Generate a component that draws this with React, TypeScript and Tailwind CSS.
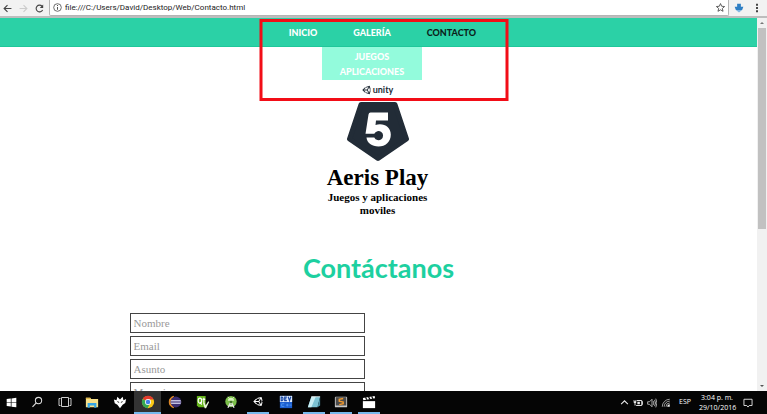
import type { ReactNode } from "react";
import { FaUnity } from "react-icons/fa";

function Glyph({ children, box = "0 0 16 16", className = "size-[14px]" }: { children: ReactNode; box?: string; className?: string }) {
  return (
    <svg viewBox={box} className={`block shrink-0 ${className}`} fill="none" aria-hidden="true">
      {children}
    </svg>
  );
}

type Task = { name: string; active?: boolean; open?: boolean; icon: ReactNode };

const tasks: Task[] = [
  {
    name: "Buscar",
    icon: (
      <Glyph className="size-[12px]">
        <circle cx="10" cy="6" r="4.2" stroke="#ddd" strokeWidth="1.4" />
        <path d="M7 9.2 2 14.5" stroke="#ddd" strokeWidth="1.6" />
      </Glyph>
    ),
  },
  {
    name: "Vista de tareas",
    icon: (
      <Glyph box="0 0 14 12" className="h-[12px] w-[14px]">
        <path d="M3.5 1.5h7v9h-7zM2.500 2.500H1v7h1.500M11.500 2.500H13v7h-1.500" stroke="#ccc" />
      </Glyph>
    ),
  },
  {
    name: "Explorador de archivos",
    icon: (
      <Glyph>
        <path d="M1 3h5l1 1.500h8V14H1z" fill="#f7e08a" />
        <path d="M1 3h5l1 1.500H1z" fill="#e0b84c" />
        <path d="M3 14.500V9h10v5.500h-2.500V12h-5v2.500z" fill="#35a5e5" />
      </Glyph>
    ),
  },
  {
    name: "GitKraken",
    icon: (
      <Glyph>
        <path d="M1 5 4 6 5 2 8 5 11 2 12 6 15 4.500 14 9 11 11 8 15 5 11 2 9.500Z" fill="#fff" />
        <path d="M5 7.500 7 8.500M11 7.500 9 8.500" stroke="#111" />
      </Glyph>
    ),
  },
  {
    name: "Chrome",
    active: true,
    open: true,
    icon: (
      <Glyph>
        <circle cx="8" cy="8" r="7" fill="#fbc916" />
        <path d="M8 8 1.900 4.600A7 7 0 0 1 14.400 5H8z" fill="#e33b2e" />
        <path d="M1.900 4.600A7 7 0 0 0 7.500 15L10.600 9.500 8 8z" fill="#36a852" />
        <circle cx="8" cy="8" r="3.400" fill="#fff" />
        <circle cx="8" cy="8" r="2.600" fill="#3f7fe8" />
      </Glyph>
    ),
  },
  {
    name: "Eclipse",
    icon: (
      <Glyph>
        <path d="M6.500 1.500a6.700 6.700 0 0 0 0 13A9 9 0 0 1 6.500 1.500z" fill="#f0932b" stroke="#f0932b" />
        <circle cx="9" cy="8" r="6.200" fill="#3b2d70" />
        <path d="M3.500 6.200h11M3 8h12M3.500 9.800h11" stroke="#c4c0e0" strokeWidth="1.200" />
      </Glyph>
    ),
  },
  {
    name: "Qt",
    icon: (
      <Glyph>
        <path d="M1 1h10v13H3l-2-2z" fill="#66b51b" />
        <ellipse cx="4.500" cy="6.500" rx="2" ry="3" stroke="#fff" strokeWidth="1.300" />
        <path d="m4.500 8 2 3M9 3v6.500M7.500 5h3" stroke="#fff" strokeWidth="1.300" />
        <path d="M8 9h2l1 3 3-5 1 1-3.500 7H10z" fill="#e8f6d8" />
      </Glyph>
    ),
  },
  {
    name: "Android Studio",
    icon: (
      <Glyph>
        <circle cx="8" cy="7.500" r="6.500" fill="#7cbf4b" />
        <path d="M4.500 6.500a3.500 3.500 0 0 1 7 0z" fill="#d9f1bd" />
        <path d="m4.500 2 1.500 2M11.500 2 10 4" stroke="#d9f1bd" />
        <path d="m8 7.500-3.500 7M8 7.500l3.500 7M5.500 12h5" stroke="#e6e6e6" strokeWidth="1.500" />
        <circle cx="8" cy="8" r="1.500" fill="#44722a" />
      </Glyph>
    ),
  },
  {
    name: "Unity",
    open: true,
    icon: <FaUnity className="size-[11px] text-white" aria-hidden="true" />,
  },
  {
    name: "Dev-C++",
    icon: (
      <Glyph>
        <path d="M1 1h14v14H1z" fill="#1d5fd0" />
        <path d="M1 1h14v7H1z" fill="#dce8fb" />
        <path d="M2.500 2.500v4h1l1-1v-2l-1-1zM9 2.500H6.500v4H9M6.500 4.500h2M10.500 2l1.500 4.500L13.500 2" stroke="#1746a5" strokeWidth="1.300" />
        <path d="M6 10H3v3h3M8 11.500h3M9.500 10v3M12 11.500h2.500" stroke="#4f97f2" />
      </Glyph>
    ),
  },
  {
    name: "Bloc de notas",
    open: true,
    icon: (
      <Glyph>
        <path d="M5 2h10l-3 12H1z" fill="#7cc3d4" />
        <path d="M5 2h5L5 14H1z" fill="#c9eef4" />
        <path d="m12 14 3-12v10z" fill="#4790a5" />
        <path d="M5 2h10" stroke="#eee" />
      </Glyph>
    ),
  },
  {
    name: "Sublime Text",
    open: true,
    icon: (
      <Glyph>
        <rect x="1" y="2" width="14" height="12" rx="1" fill="#c9c9c9" />
        <rect x="2" y="2.500" width="12" height="9.500" fill="#4b4b4b" />
        <path d="M10.500 4 6 5v2l4.500 1v2L6 11" stroke="#f29a2e" strokeWidth="1.600" />
      </Glyph>
    ),
  },
  {
    name: "Películas y TV",
    open: true,
    icon: (
      <Glyph>
        <path d="M1 7h14v8H1z" fill="#fff" />
        <path d="m1 3.500 13.500-2.300.4 2.500L1.500 6z" fill="#fff" />
        <path d="m4 2.500 1.500 3M7.500 2 9 5M11 1.500l1.500 3" stroke="#111" strokeWidth="1.400" />
      </Glyph>
    ),
  },
];

const linkStyle = "block whitespace-nowrap hover:underline";

function BrowserBar() {
  return (
    <header className="flex h-[18px] shrink-0 items-center border-b-2 border-[#bdbdbd] bg-[#f2f2f2]">
      <div className="flex w-[49px] shrink-0 items-center justify-between pr-[5px] pl-[3px]">
        <button aria-label="Atrás">
          <Glyph className="size-[9px]">
            <path d="M15 8H2M8 2 2 8l6 6" stroke="#444" strokeWidth="2" />
          </Glyph>
        </button>
        <button aria-label="Adelante">
          <Glyph className="size-[9px]">
            <path d="M1 8h13M8 2l6 6-6 6" stroke="#ccc" strokeWidth="2" />
          </Glyph>
        </button>
        <button aria-label="Recargar">
          <Glyph className="size-[9px]">
            <path d="M13.500 10.500A6 6 0 1 1 12.500 4" stroke="#444" strokeWidth="2" />
            <path d="M14.500 1v6h-6z" fill="#444" />
          </Glyph>
        </button>
      </div>
      <div className="flex h-[16px] min-w-0 flex-1 items-center gap-[3px] rounded-b-xs border border-t-0 border-[#b5b5b5] bg-white px-[3px]">
        <Glyph className="size-[9px]">
          <circle cx="8" cy="8" r="6.800" stroke="#555" strokeWidth="1.500" />
          <path d="M8 7v5M8 3.500v2" stroke="#555" strokeWidth="1.800" />
        </Glyph>
        <input
          aria-label="Dirección"
          defaultValue="file:///C:/Users/David/Desktop/Web/Contacto.html"
          className="h-[14px] min-w-0 flex-1 bg-transparent font-['Roboto',sans-serif] text-[8px] text-[#222] outline-none"
        />
        <button aria-label="Favorito">
          <Glyph className="size-[9px]">
            <path d="m8 1 2.100 4.800 5.200.5-4 3.400 1.200 5.100L8 12.100l-4.500 2.700 1.200-5.100-4-3.400 5.200-.5z" stroke="#444" strokeWidth="1.500" />
          </Glyph>
        </button>
      </div>
      <div className="flex w-[38px] shrink-0 items-center justify-between px-[5px]">
        <button aria-label="Descargas">
          <Glyph className="size-[10px]">
            <path d="M5 1h6v5h4l-2 5H3L1 6h4z" fill="#2f7fc4" />
            <path d="M3 11h10l-5 4z" fill="#7fb7e2" />
          </Glyph>
        </button>
        <button aria-label="Menú">
          <Glyph box="0 0 10 10" className="size-[10px]">
            <path d="M4 .8h2v2H4zM4 4h2v2H4zM4 7.200h2v2H4z" fill="#444" />
          </Glyph>
        </button>
      </div>
    </header>
  );
}

function SiteNav() {
  return (
    <nav className="flex h-[29px] justify-center border-b border-[#1fc79a] bg-[#2bd1a6] font-['Lato',sans-serif] text-[9px] leading-[15px] font-black text-white">
      <ul className="flex items-start gap-9 pt-[7px] pl-2">
        <li>
          <a href="#inicio" className={linkStyle}>INICIO</a>
        </li>
        <li className="relative">
          <a href="#galeria" className={linkStyle}>GALERÍA</a>
          <ul className="absolute top-[22px] left-1/2 z-10 w-[100px] -translate-x-1/2 bg-[#93fbdc] pt-[2px] pb-[1px] text-center">
            <li>
              <a href="#juegos" className={linkStyle}>JUEGOS</a>
            </li>
            <li>
              <a href="#aplicaciones" className={linkStyle}>APLICACIONES</a>
            </li>
          </ul>
        </li>
        <li>
          <a href="#contacto" className={`${linkStyle} text-[#0c1f1a]`}>CONTACTO</a>
        </li>
      </ul>
    </nav>
  );
}

function Brand() {
  return (
    <section className="flex flex-col items-center pt-[37px] pr-[2px] font-['Liberation_Serif',serif] font-bold text-black">
      <div className="flex h-[12px] items-center gap-[1px] text-[#222c37]">
        <FaUnity className="size-[10px]" aria-hidden="true" />
        <span className="font-['Lato',sans-serif] text-[9px] leading-[10px]">unity</span>
      </div>
      <svg viewBox="0 0 62 60" className="mt-[6px] h-[60px] w-[62px]" role="img" aria-label="Unity 5">
        <path
          d="M14 2.500h34L59.500 37 31 56.500 2.500 37Z"
          fill="#222c37"
          stroke="#222c37"
          strokeWidth="5"
          strokeLinejoin="round"
        />
        <path
          d="M23.500 10.500h17.500v8H29l-.5 4.500c8-2.500 15.300 2 15.300 9.500 0 7.500-5.300 12-12.300 12-6.600 0-11.500-3.600-12-9h7.800a4.600 4.600 0 1 0 0-3.800H18.500L21.500 12.500q.3-2 2-2z"
          fill="#fff"
        />
      </svg>
      <h1 className="mt-[3px] text-[23px] leading-[26px]">Aeris Play</h1>
      <p className="w-[110px] text-center text-[11px] leading-[13px]">Juegos y aplicaciones moviles</p>
    </section>
  );
}

const fields = ["Nombre", "Email", "Asunto"];
const fieldStyle =
  "block w-full border border-[#444] bg-white px-[3px] text-[11px] leading-[18px] text-black outline-none placeholder:text-[#999]";

function ContactForm() {
  return (
    <section className="pt-[33px]">
      <h2 className="text-center font-['Lato',sans-serif] text-[27px] leading-[36px] font-bold text-[#1dd0a0]">
        Contáctanos
      </h2>
      <form className="mx-auto mt-[27px] flex w-[498px] max-w-full flex-col gap-[3px] font-['Liberation_Serif',serif]">
        {fields.map((name) => (
          <input key={name} aria-label={name} placeholder={name} className={`${fieldStyle} h-[20px] max-w-[235px]`} />
        ))}
        <textarea aria-label="Mensaje" placeholder="Mensaje" className={`${fieldStyle} h-[90px] max-w-[235px] resize-none`} />
      </form>
    </section>
  );
}

function Scrollbar() {
  return (
    <div className="flex w-[10px] shrink-0 flex-col items-center bg-[#f1f1f1]" aria-hidden="true">
      <Glyph box="0 0 10 10" className="size-[10px]">
        <path d="M3 6h4L5 4z" fill="#777" />
      </Glyph>
      <div className="h-[54%] w-[8px] bg-[#c1c1c1]" />
      <Glyph box="0 0 10 10" className="mt-auto size-[10px]">
        <path d="M3 4h4L5 6z" fill="#555" />
      </Glyph>
    </div>
  );
}

function Taskbar() {
  return (
    <footer className="flex h-[23px] shrink-0 items-stretch bg-[#050505] font-['Open_Sans',sans-serif] text-white">
      <button aria-label="Inicio" className="flex w-[23px] items-center justify-center">
        <Glyph className="size-[11px]">
          <path d="m1 3 6-.9v5.400H1zM8 2l7-1v6.500H8zM1 8.500h6v5.400L1 13zM8 8.500h7V15l-7-1z" fill="#fff" />
        </Glyph>
      </button>
      <div className="grid w-[360px] grid-cols-13">
        {tasks.map((task) => (
          <button
            key={task.name}
            aria-label={task.name}
            className={`flex flex-col items-center ${task.active ? "bg-[#333]" : ""}`}
          >
            <span className="flex h-[21px] items-center">{task.icon}</span>
            {task.open && <span className={`h-[2px] bg-[#76b9ed] ${task.active ? "w-full" : "w-[22px]"}`} />}
          </button>
        ))}
      </div>
      <div className="ml-auto flex items-center gap-[4px] pr-[14px] text-[7px]">
        <Glyph className="size-[9px]">
          <path d="m2 11 6-6 6 6" stroke="#eee" strokeWidth="1.800" />
        </Glyph>
        <Glyph className="size-[10px]">
          <path d="M6 4h8v8H5M14 6h1.500v4H14" stroke="#eee" strokeWidth="1.500" />
          <path d="M1 3h1.200v2H4V3h1.200v4L4 8.500V12H2.500V8.500L1 7zM7 6h4v4H7z" fill="#eee" />
        </Glyph>
        <Glyph className="size-[10px]">
          <path d="M1 6h3l4-4v12l-4-4H1zM10 5q2 3 0 6M12 3q3.500 5 0 10M14 1q4 7 0 14" stroke="#ddd" strokeWidth="1.200" />
        </Glyph>
        <Glyph className="size-[10px]">
          <path d="M2 14A12 12 0 0 1 14 2M5 14a9 9 0 0 1 9-9M8 14a6 6 0 0 1 6-6" stroke="#bbb" strokeWidth="1.300" />
          <path d="M10 14a4 4 0 0 1 4-4v4z" fill="#eee" />
        </Glyph>
        <span className="ml-1">ESP</span>
        <time className="ml-1 w-[36px] text-center leading-[10px] whitespace-nowrap" dateTime="2016-10-29T15:04">
          3:04 p. m.
          <br />
          29/10/2016
        </time>
        <button aria-label="Notificaciones" className="ml-1">
          <Glyph className="size-[10px]">
            <path d="M1.500 2h13v10H10l-2 2.500L6 12H1.500z" stroke="#eee" strokeWidth="1.400" />
          </Glyph>
        </button>
      </div>
    </footer>
  );
}

export default function App() {
  return (
    <div className="flex h-screen flex-col overflow-hidden bg-white">
      <BrowserBar />
      <div className="relative flex min-h-0 flex-1">
        <main className="min-w-0 flex-1 overflow-hidden">
          <SiteNav />
          <Brand />
          <ContactForm />
        </main>
        <Scrollbar />
        <div className="pointer-events-none absolute top-[1px] left-1/2 z-20 h-[82px] w-[249px] -translate-x-1/2 border-3 border-[#f20d17]" />
      </div>
      <Taskbar />
    </div>
  );
}
